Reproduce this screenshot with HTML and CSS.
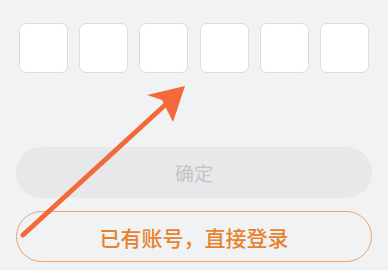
FILE: index.html
```html
<!DOCTYPE html>
<html lang="zh-CN">

<head>
    <meta charset="UTF-8">
    <meta name="viewport" content="width=device-width, initial-scale=1.0">
    <title>验证码</title>
    <link rel="stylesheet" href="styles.css">
</head>

<body>

    <div class="page">
        <div class="code-row">
            <div class="code-box"></div>
            <div class="code-box"></div>
            <div class="code-box"></div>
            <div class="code-box"></div>
            <div class="code-box"></div>
            <div class="code-box"></div>
        </div>

        <button class="btn btn-confirm" disabled>确定</button>
        <button class="btn btn-login">已有账号，直接登录</button>

        <!-- annotation arrow -->
        <svg class="arrow" width="388" height="270" viewBox="0 0 388 270">
            <line x1="23" y1="235" x2="176" y2="95" stroke="#f36a3a" stroke-width="5" stroke-linecap="round" />
            <path d="M185 86 L147 95 L162 100 L173 122 Z" fill="#f36a3a" />
        </svg>
    </div>

</body>

</html>
```

FILE: styles.css
```css
body {
    margin: 0;
    padding: 0;
    background-color: #f1f2f4;
    font-family: "Noto Sans CJK SC", "Noto Sans", sans-serif;
}

.page {
    position: relative;
    width: 388px;
    height: 270px;
    padding-top: 23px;
    box-sizing: border-box;
}

.code-row {
    display: flex;
    justify-content: space-between;
    margin: 0 19px 0 19px;
}

.code-box {
    width: 49px;
    height: 50px;
    box-sizing: border-box;
    background-color: #fff;
    border: 1px solid #dcdde0;
    border-radius: 7px;
}

.btn {
    display: block;
    width: 356px;
    height: 51px;
    margin: 0 16px;
    border-radius: 26px;
    font-family: inherit;
    font-size: 20px;
    box-sizing: border-box;
    padding: 0;
}

.btn-confirm {
    margin-top: 74px;
    background-color: #e7e8ea;
    color: #c3c4c6;
    border: none;
    font-size: 19px;
    font-weight: 400;
}

.btn-login {
    margin-top: 13px;
    background-color: transparent;
    color: #e8822f;
    border: 1.5px solid #eba56c;
    font-size: 21px;
    font-weight: 500;
}

.arrow {
    position: absolute;
    left: 0;
    top: 0;
    pointer-events: none;
}
```
